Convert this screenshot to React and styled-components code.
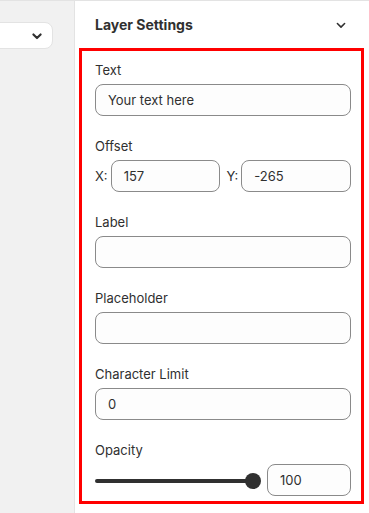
import React from "react";
import styled, { createGlobalStyle } from "styled-components";

const GlobalStyle = createGlobalStyle`
  html, body {
    margin: 0;
    padding: 0;
    background: #ffffff;
  }
  body {
    font-family: Inter, "Noto Sans", "Liberation Sans", sans-serif;
    color: #303030;
  }
  * {
    box-sizing: border-box;
  }
`;

const Chevron = ({ size = 10, weight = 1.5 }) => (
  <svg width={size} height={size} viewBox="0 0 10 10" fill="none">
    <path
      d="M2 3.75 L5 6.75 L8 3.75"
      stroke="#303030"
      strokeWidth={weight}
      strokeLinecap="round"
      strokeLinejoin="round"
    />
  </svg>
);

const fields = [
  { label: "Text", value: "Your text here" },
  { label: "Label", value: "" },
  { label: "Placeholder", value: "" },
  { label: "Character Limit", value: "0" },
];

export default function App() {
  return (
    <>
      <GlobalStyle />
      <Page>
        <Sidebar>
          <SelectBox>
            <SelectText>Text list</SelectText>
            <Chevron size={12} weight={1.8} />
          </SelectBox>
        </Sidebar>
        <Panel>
          <Header>
            <HeaderTitle>Layer Settings</HeaderTitle>
            <Chevron size={12} weight={1.3} />
          </Header>
          <Highlight>
            <Field>
              <Label>{fields[0].label}</Label>
              <Input>{fields[0].value}</Input>
            </Field>
            <Field>
              <Label>Offset</Label>
              <OffsetRow>
                <AxisGroup>
                  <AxisLabel>X:</AxisLabel>
                  <Input $grow>157</Input>
                </AxisGroup>
                <AxisGroup>
                  <AxisLabel>Y:</AxisLabel>
                  <Input $grow>-265</Input>
                </AxisGroup>
              </OffsetRow>
            </Field>
            {fields.slice(1).map((f) => (
              <Field key={f.label}>
                <Label>{f.label}</Label>
                <Input>{f.value}</Input>
              </Field>
            ))}
            <Field>
              <Label>Opacity</Label>
              <SliderRow>
                <Slider>
                  <Track />
                  <Thumb />
                </Slider>
                <NumberInput>100</NumberInput>
              </SliderRow>
            </Field>
          </Highlight>
        </Panel>
      </Page>
    </>
  );
}

const Page = styled.div`
  display: flex;
  width: 369px;
  height: 513px;
  overflow: hidden;
  border-top: 1px solid #e3e3e3;
`;

const Sidebar = styled.div`
  width: 75px;
  flex-shrink: 0;
  background: #f1f1f1;
  border-right: 1px solid #e3e3e3;
  padding-top: 21px;
  overflow: hidden;
`;

const SelectBox = styled.div`
  width: 120px;
  height: 27px;
  margin-left: -67px;
  display: flex;
  align-items: center;
  justify-content: space-between;
  padding: 0 9px 0 10px;
  background: #ffffff;
  border: 1px solid #e3e3e3;
  border-radius: 8px;
`;

const SelectText = styled.span`
  font-size: 13px;
  color: #8fc2f0;
  white-space: nowrap;
`;

const Panel = styled.div`
  flex: 1;
  background: #ffffff;
  display: flex;
  flex-direction: column;
`;

const Header = styled.div`
  height: 47px;
  flex-shrink: 0;
  display: flex;
  align-items: center;
  justify-content: space-between;
  padding: 0 22px 0 20px;
`;

const HeaderTitle = styled.h2`
  margin: 0;
  font-size: 14px;
  font-weight: 650;
  color: #303030;
`;

const Highlight = styled.div`
  margin: 0 5px 0 4px;
  border: 3px solid #ff0000;
  padding: 11px 10px 5px 13px;
  display: flex;
  flex-direction: column;
  gap: 22px;
`;

const Field = styled.div`
  display: flex;
  flex-direction: column;
  gap: 6px;
`;

const Label = styled.div`
  font-size: 13px;
  line-height: 16px;
  color: #303030;
`;

const Input = styled.div`
  flex: ${({ $grow }) => ($grow ? "1 1 0" : "0 0 32px")};
  min-width: 0;
  height: 32px;
  display: flex;
  align-items: center;
  padding: 0 12px;
  font-size: 13px;
  color: #303030;
  background: #fdfdfd;
  border: 1px solid #8a8a8a;
  border-radius: 8px;
  white-space: nowrap;
`;

const OffsetRow = styled.div`
  display: grid;
  grid-template-columns: 1fr 1fr;
  gap: 7px;
`;

const AxisGroup = styled.div`
  display: flex;
  align-items: center;
  gap: 3px;
`;

const AxisLabel = styled.span`
  font-size: 13px;
  color: #303030;
`;

const SliderRow = styled.div`
  display: flex;
  align-items: center;
  gap: 6px;
`;

const Slider = styled.div`
  flex: 1;
  display: flex;
  align-items: center;
  padding-top: 1px;
`;

const Track = styled.div`
  flex: 1;
  height: 4px;
  border-radius: 2px;
  background: #303030;
  margin-right: -8px;
`;

const Thumb = styled.div`
  width: 16px;
  height: 16px;
  border-radius: 50%;
  background: #303030;
  flex-shrink: 0;
`;

const NumberInput = styled(Input)`
  flex: 0 0 84px;
`;
